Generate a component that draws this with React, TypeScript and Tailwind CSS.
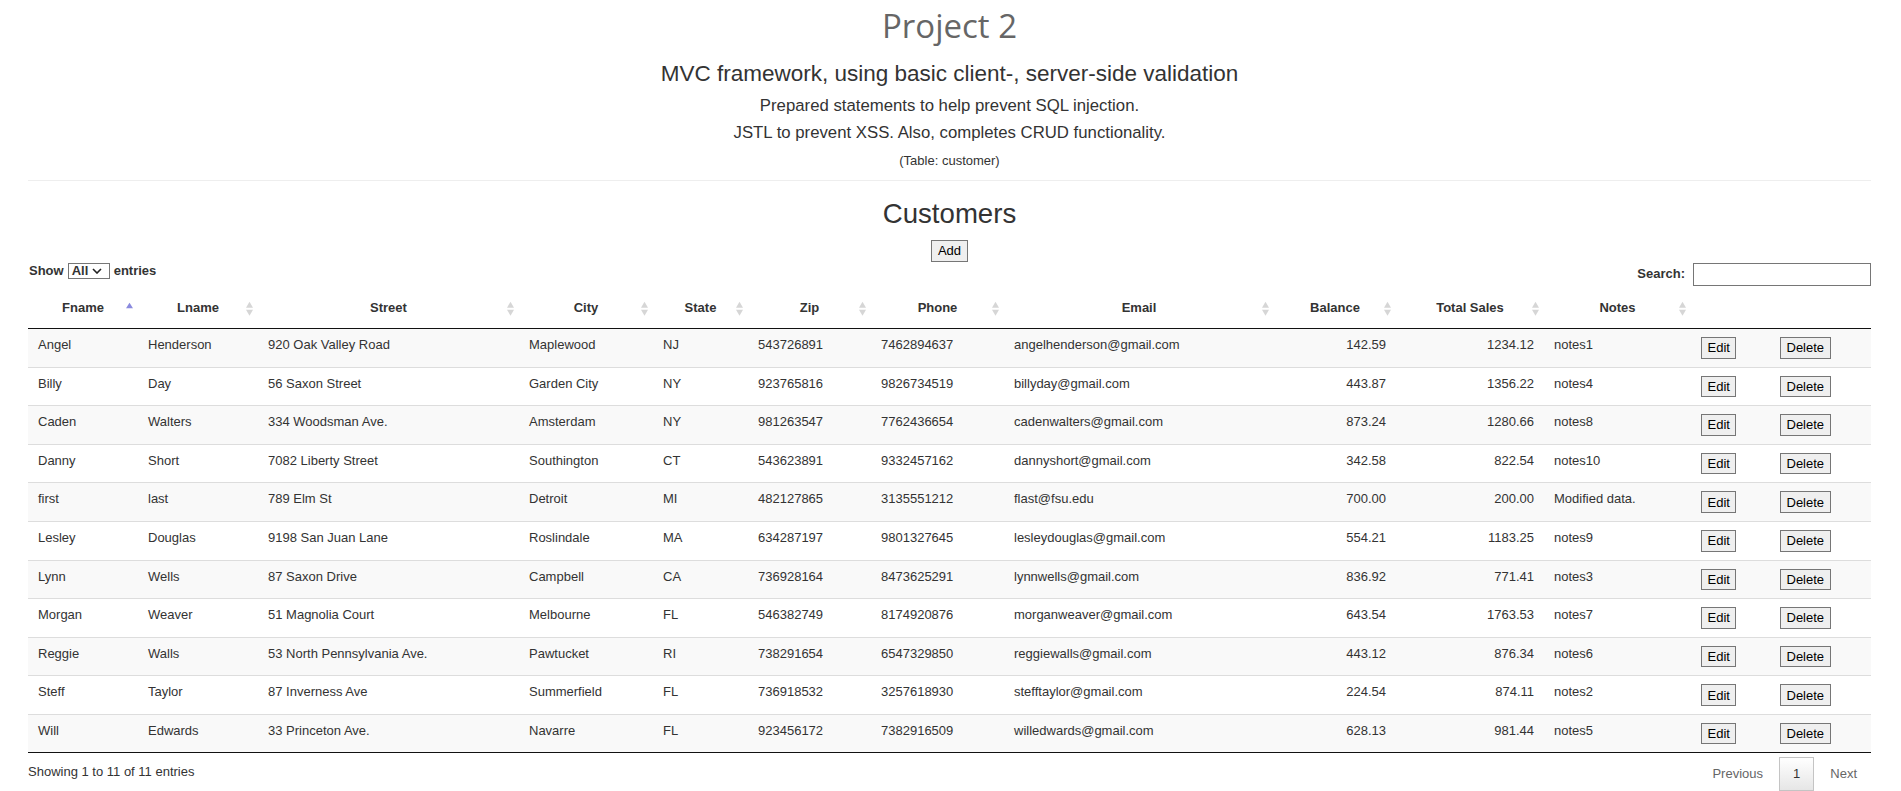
import React from "react";

type Row = [string, string, string, string, string, string, string, string, string, string, string];

const rows: Row[] = [
  ["Angel", "Henderson", "920 Oak Valley Road", "Maplewood", "NJ", "543726891", "7462894637", "angelhenderson@gmail.com", "142.59", "1234.12", "notes1"],
  ["Billy", "Day", "56 Saxon Street", "Garden City", "NY", "923765816", "9826734519", "billyday@gmail.com", "443.87", "1356.22", "notes4"],
  ["Caden", "Walters", "334 Woodsman Ave.", "Amsterdam", "NY", "981263547", "7762436654", "cadenwalters@gmail.com", "873.24", "1280.66", "notes8"],
  ["Danny", "Short", "7082 Liberty Street", "Southington", "CT", "543623891", "9332457162", "dannyshort@gmail.com", "342.58", "822.54", "notes10"],
  ["first", "last", "789 Elm St", "Detroit", "MI", "482127865", "3135551212", "flast@fsu.edu", "700.00", "200.00", "Modified data."],
  ["Lesley", "Douglas", "9198 San Juan Lane", "Roslindale", "MA", "634287197", "9801327645", "lesleydouglas@gmail.com", "554.21", "1183.25", "notes9"],
  ["Lynn", "Wells", "87 Saxon Drive", "Campbell", "CA", "736928164", "8473625291", "lynnwells@gmail.com", "836.92", "771.41", "notes3"],
  ["Morgan", "Weaver", "51 Magnolia Court", "Melbourne", "FL", "546382749", "8174920876", "morganweaver@gmail.com", "643.54", "1763.53", "notes7"],
  ["Reggie", "Walls", "53 North Pennsylvania Ave.", "Pawtucket", "RI", "738291654", "6547329850", "reggiewalls@gmail.com", "443.12", "876.34", "notes6"],
  ["Steff", "Taylor", "87 Inverness Ave", "Summerfield", "FL", "736918532", "3257618930", "stefftaylor@gmail.com", "224.54", "874.11", "notes2"],
  ["Will", "Edwards", "33 Princeton Ave.", "Navarre", "FL", "923456172", "7382916509", "willedwards@gmail.com", "628.13", "981.44", "notes5"],
];

const colWidths = [
  "w-[110px]",
  "w-[120px]",
  "w-[261px]",
  "w-[134px]",
  "w-[95px]",
  "w-[123px]",
  "w-[133px]",
  "w-[270px]",
  "w-[122px]",
  "w-[148px]",
  "w-[147px]",
  "w-[79px]",
  "w-[101px]",
];

const headers = ["Fname", "Lname", "Street", "City", "State", "Zip", "Phone", "Email", "Balance", "Total Sales", "Notes"];

function SortIcon({ asc }: { asc?: boolean }) {
  return (
    <svg
      width="7"
      height="16"
      viewBox="0 0 7 16"
      className="absolute right-[5.5px] top-1/2 -translate-y-1/2"
    >
      {asc ? (
        <polygon points="3.5,2.7 7,8.3 0,8.3" fill="#8a8ade" />
      ) : (
        <>
          <polygon points="3.5,1.7 7,7.7 0,7.7" fill="#d6d6d6" />
          <polygon points="0,9.7 7,9.7 3.5,15.7" fill="#d6d6d6" />
        </>
      )}
    </svg>
  );
}

function Btn({ children }: { children: React.ReactNode }) {
  return (
    <button className="h-[21.6px] px-[5.5px] border border-[#767676] bg-[#efefef] text-black text-[13px] leading-[19px] font-['Liberation_Sans',Arial,sans-serif]">
      {children}
    </button>
  );
}

export default function App() {
  return (
    <div className="min-h-screen bg-white font-['Liberation_Sans',Arial,sans-serif] text-[#333]">
      <div className="ml-[28px] w-[1843px] pt-[5.5px]">
        <div className="text-center font-['Open_Sans',sans-serif] text-[33px] leading-[40px] text-[#666]">
          Project 2
        </div>
        <div className="mt-[15.4px] text-center text-[22.5px] leading-[26px]">
          MVC framework, using basic client-, server-side validation
        </div>
        <div className="mt-[9px] text-center text-[16.75px] leading-[20px]">
          Prepared statements to help prevent SQL injection.
        </div>
        <div className="mt-[7.6px] text-center text-[16.75px] leading-[20px]">
          JSTL to prevent XSS. Also, completes CRUD functionality.
        </div>
        <div className="mt-[9.5px] text-center text-[13px] leading-[16px]">(Table: customer)</div>
        <hr className="mt-[11px] border-0 border-t border-[#eee]" />
        <div className="mt-[17.4px] text-center text-[27.6px] leading-[32px]">Customers</div>
        <div className="mt-[9.9px] flex justify-center">
          <button className="h-[22px] px-[5.5px] border border-[#767676] bg-[#efefef] text-black text-[13px] leading-[20px]">
            Add
          </button>
        </div>
        <div className="mt-[0.7px] flex h-[23px] items-start justify-between">
          <div className="mt-[0.5px] flex h-[16px] items-center text-[13px] font-bold leading-[16px]">
            <span className="ml-[1px]">Show</span>
            <span className="ml-[4px] flex h-[16px] w-[42px] items-center border border-[#767676] pl-[3px]">
              <span>All</span>
              <svg width="10" height="6" viewBox="0 0 10 6" className="ml-[4px]">
                <polyline points="1,1 5,5 9,1" fill="none" stroke="#222" strokeWidth="1.6" />
              </svg>
            </span>
            <span className="ml-[4px]">entries</span>
          </div>
          <div className="flex h-[23px] items-center text-[13px] font-bold">
            <span className="mt-[-1px]">Search:</span>
            <input className="ml-[7.5px] h-[22.5px] w-[178.5px] border border-[#767676] bg-white px-1 text-[13px] font-normal outline-none" />
          </div>
        </div>
        <table className="mt-[2px] w-[1843px] table-fixed border-separate border-spacing-0 text-[13px]">
          <colgroup>
            {colWidths.map((w, i) => (
              <col key={i} className={w} />
            ))}
          </colgroup>
          <thead>
            <tr>
              {headers.map((h, i) => (
                <th
                  key={h}
                  className="relative border-b border-[#111] px-[10px] py-[10px] text-center text-[13px] font-bold leading-[20px] text-[#333]"
                >
                  {h}
                  <SortIcon asc={i === 0} />
                </th>
              ))}
              <th className="border-b border-[#111] px-[10px] py-[10px] leading-[20px]"></th>
              <th className="border-b border-[#111] px-[10px] py-[10px] leading-[20px]"></th>
            </tr>
          </thead>
          <tbody>
            {rows.map((r, ri) => {
              const bg = ri % 2 === 0 ? "bg-[#f9f9f9]" : "bg-white";
              const bt = ri === 0 ? "" : "border-t border-[#ddd]";
              const td = `${bg} ${bt} align-top px-[10px] py-[8px] leading-[16px] text-[13px] text-[#333] whitespace-nowrap overflow-hidden`;
              return (
                <tr key={ri}>
                  {r.map((c, ci) => (
                    <td key={ci} className={`${td} ${ci === 8 || ci === 9 ? "text-right" : "text-left"}`}>
                      {c}
                    </td>
                  ))}
                  <td className={td}>
                    <Btn>Edit</Btn>
                  </td>
                  <td className={td}>
                    <Btn>Delete</Btn>
                  </td>
                </tr>
              );
            })}
          </tbody>
        </table>
        <div className="border-t border-[#111]" />
        <div className="flex items-start justify-between">
          <div className="pt-[9.4px] text-[13px] leading-[18.6px]">Showing 1 to 11 of 11 entries</div>
          <div className="flex pt-[4px] text-[13px] leading-[18.6px]">
            <span className="border border-transparent px-[13px] py-[6.5px] text-[#666]">Previous</span>
            <span className="ml-[2px] border border-[#c4c4c4] bg-linear-to-b from-white to-[#e6e6e6] px-[13px] py-[6.5px] text-[#333]">
              1
            </span>
            <span className="ml-[2px] border border-transparent px-[13px] py-[6.5px] text-[#666]">Next</span>
          </div>
        </div>
      </div>
    </div>
  );
}
